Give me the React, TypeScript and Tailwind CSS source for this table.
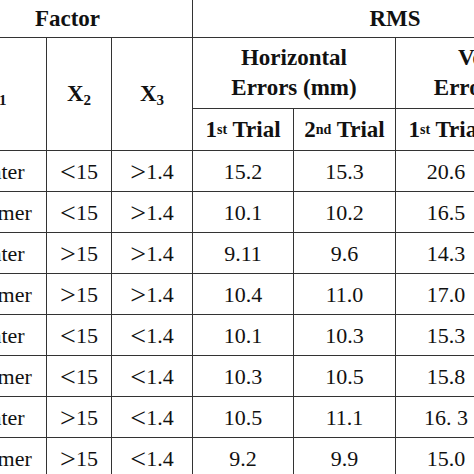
import * as React from 'react';

// Results table: RMS errors for each factor combination (cropped view)
const rows = [
  ['Winter', '<15', '>1.4', '15.2', '15.3', '20.6', '21.1'],
  ['Summer', '<15', '>1.4', '10.1', '10.2', '16.5', '16.8'],
  ['Winter', '>15', '>1.4', '9.11', '9.6', '14.3', '14.9'],
  ['Summer', '>15', '>1.4', '10.4', '11.0', '17.0', '17.2'],
  ['Winter', '<15', '<1.4', '10.1', '10.3', '15.3', '15.6'],
  ['Summer', '<15', '<1.4', '10.3', '10.5', '15.8', '16.1'],
  ['Winter', '>15', '<1.4', '10.5', '11.1', '16. 3', '16.7'],
  ['Summer', '>15', '<1.4', '9.2', '9.9', '15.0', '15.4'],
];

const cell = 'border border-[#333] text-center align-middle p-0';

function Trial({ n, sup }: { n: string; sup: string }) {
  return (
    <span>
      {n}
      <sup className="text-[14px] relative -top-[3px]">{sup}</sup> Trial
    </span>
  );
}

// comparison signs are drawn larger in the source table
function Value({ v }: { v: string }) {
  if (v.startsWith('<') || v.startsWith('>')) {
    return (
      <span>
        <span className="text-[28px] leading-none relative top-[2px]">{v[0]}</span>
        {v.slice(1)}
      </span>
    );
  }
  return <span>{v}</span>;
}

export default function App() {
  return (
    <div
      className="w-[474px] h-[474px] overflow-hidden bg-white text-[#111]"
      style={{ fontFamily: '"Liberation Serif", "Times New Roman", serif' }}
    >
      <table className="border-collapse table-fixed -ml-[58px] -mt-[1px] w-[655px]">
        <colgroup>
          <col className="w-[104px]" />
          <col className="w-[65px]" />
          <col className="w-[81px]" />
          <col className="w-[101px]" />
          <col className="w-[102px]" />
          <col className="w-[101px]" />
          <col className="w-[101px]" />
        </colgroup>
        <thead className="font-bold text-[23px] leading-[30px]">
          <tr className="h-[38px]">
            <th colSpan={3} className={cell}>Factor</th>
            <th colSpan={4} className={cell}>RMS</th>
          </tr>
          <tr className="h-[71px]">
            <th rowSpan={2} className={cell}>
              X<sub className="text-[15px]">1</sub>
            </th>
            <th rowSpan={2} className={cell}>
              X<sub className="text-[15px]">2</sub>
            </th>
            <th rowSpan={2} className={cell}>
              X<sub className="text-[15px]">3</sub>
            </th>
            <th colSpan={2} className={cell}>
              Horizontal
              <br />
              Errors (mm)
            </th>
            <th colSpan={2} className={cell}>
              Vertical
              <br />
              Errors (mm)
            </th>
          </tr>
          <tr className="h-[42px]">
            <th className={cell}><Trial n="1" sup="st" /></th>
            <th className={cell}><Trial n="2" sup="nd" /></th>
            <th className={cell}><Trial n="1" sup="st" /></th>
            <th className={cell}><Trial n="2" sup="nd" /></th>
          </tr>
        </thead>
        <tbody className="text-[22px]">
          {rows.map((r, i) => (
            <tr key={i} className="h-[41px]">
              {r.map((v, j) => (
                <td key={j} className={cell}><Value v={v} /></td>
              ))}
            </tr>
          ))}
        </tbody>
      </table>
    </div>
  );
}
